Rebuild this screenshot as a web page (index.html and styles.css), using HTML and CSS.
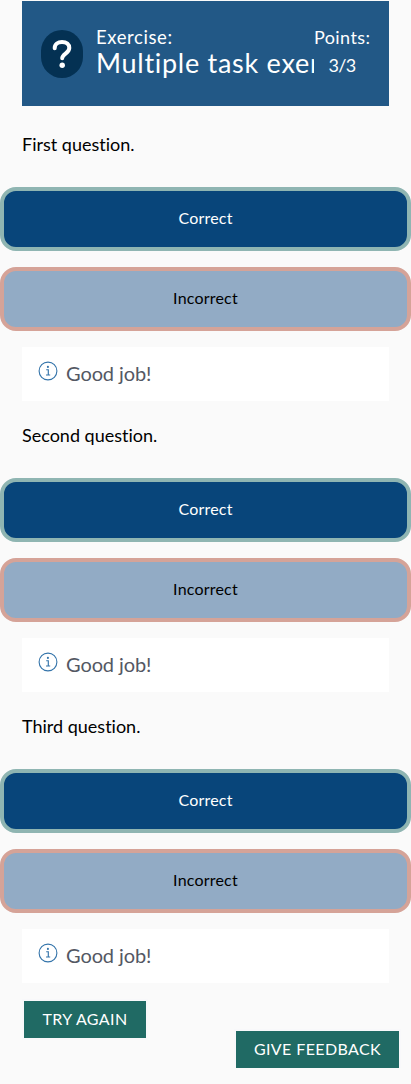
FILE: index.html
```html
<!DOCTYPE html>
<html lang="en">
<head>
<meta charset="utf-8">
<title>Multiple task exercise</title>
<link rel="stylesheet" href="styles.css">
</head>
<body>
<svg class="defs" width="0" height="0" aria-hidden="true">
  <symbol id="info" viewBox="0 0 20 20">
    <circle cx="10" cy="10" r="8.9" fill="none" stroke="currentColor" stroke-width="1.1"/>
    <circle cx="9.9" cy="5.9" r="1.05" fill="currentColor"/>
    <path d="M8.2 8.7h2.1v5.2M8 14h4.2" fill="none" stroke="currentColor" stroke-width="1.15"/>
  </symbol>
</svg>
<header class="header">
  <svg class="badge" viewBox="0 0 42 48" aria-hidden="true">
    <rect width="42" height="48" rx="21" fill="#043153"/>
    <path d="M13.7 18.2C13.7 14 17 12 21 12c4.5 0 7.3 2.4 7.3 6 0 5.3-7.1 5.700-7.1 10.300" fill="none" stroke="#fff" stroke-width="4" stroke-linecap="round" stroke-linejoin="round"/>
    <circle cx="21.2" cy="35.3" r="2.7" fill="#fff"/>
  </svg>
  <div class="titles">
    <div class="kicker">Exercise:</div>
    <h1 class="title">Multiple task exercise</h1>
  </div>
  <div class="points"><div class="points-label">Points:</div><div class="points-value">3/3</div></div>
</header>
<main>
  <section class="task">
    <p class="question">First question.</p>
    <button class="answer correct">Correct</button>
    <button class="answer incorrect">Incorrect</button>
    <div class="result"><svg class="info"><use href="#info"/></svg><span>Good job!</span></div>
  </section>
  <section class="task">
    <p class="question">Second question.</p>
    <button class="answer correct">Correct</button>
    <button class="answer incorrect">Incorrect</button>
    <div class="result"><svg class="info"><use href="#info"/></svg><span>Good job!</span></div>
  </section>
  <section class="task">
    <p class="question">Third question.</p>
    <button class="answer correct">Correct</button>
    <button class="answer incorrect">Incorrect</button>
    <div class="result"><svg class="info"><use href="#info"/></svg><span>Good job!</span></div>
  </section>
</main>
<footer class="actions">
  <button class="action retry">TRY AGAIN</button>
  <button class="action feedback">GIVE FEEDBACK</button>
</footer>
</body>
</html>
```
FILE: styles.css
```css
* { box-sizing: border-box; }
body { margin: 0; padding-top: 1px; background: #fafafa; color: #000; font-family: Lato, sans-serif; font-variant-ligatures: none; overflow: hidden; }
.defs { display: block; height: 0; }
.header { display: flex; height: 105px; margin: 0 22px 4px; padding: 0 19px; background: #225886; color: #fff; }
.badge { flex: none; width: 42px; height: 48px; margin-top: 29px; }
.titles { width: 218px; margin: 25px 0 0 13px; overflow: hidden; white-space: nowrap; }
.kicker { font-size: 18.5px; line-height: 22px; letter-spacing: .6px; }
.title { margin: 0; font-size: 27px; font-weight: 400; line-height: 30px; letter-spacing: .72px; }
.points { flex: none; width: 56px; padding-top: 22px; text-align: center; font-size: 18px; line-height: 28px; white-space: nowrap; }
.points-label { letter-spacing: .4px; }
.points-value { letter-spacing: -.6px; }
.task { display: flex; flex-direction: column; }
.question { height: 77px; margin: 0; padding: 21px 22px 0; font-size: 18px; line-height: 27px; }
.answer { height: 64px; margin: 0 0 16px; padding: 0 0 2px; border: 4px solid; border-radius: 16px; font: 16px/24px Lato, sans-serif; letter-spacing: .2px; }
.correct { border-color: #8fb5b2; background: #08457a; color: #fff; }
.incorrect { border-color: #d5a398; background: #92abc5; color: #000; }
.result { display: flex; height: 54px; margin: 0 22px; padding: 14px 16px 0; background: #fff; color: #545863; font-size: 20px; line-height: 24px; letter-spacing: -.1px; }
.info { width: 20px; height: 20px; margin-right: 8px; color: #3474aa; }
.actions { display: flex; flex-direction: column; padding: 18px 12px 0 24px; }
.action { height: 37px; padding: 0 0 2px; border: 0; background: #206a64; color: #fff; font: 16px/24px Lato, sans-serif; letter-spacing: .4px; box-shadow: 0 0 0 2px #f8f8fa; }
.retry { width: 122px; }
.feedback { align-self: flex-end; width: 163px; margin-top: -7px; }
```
